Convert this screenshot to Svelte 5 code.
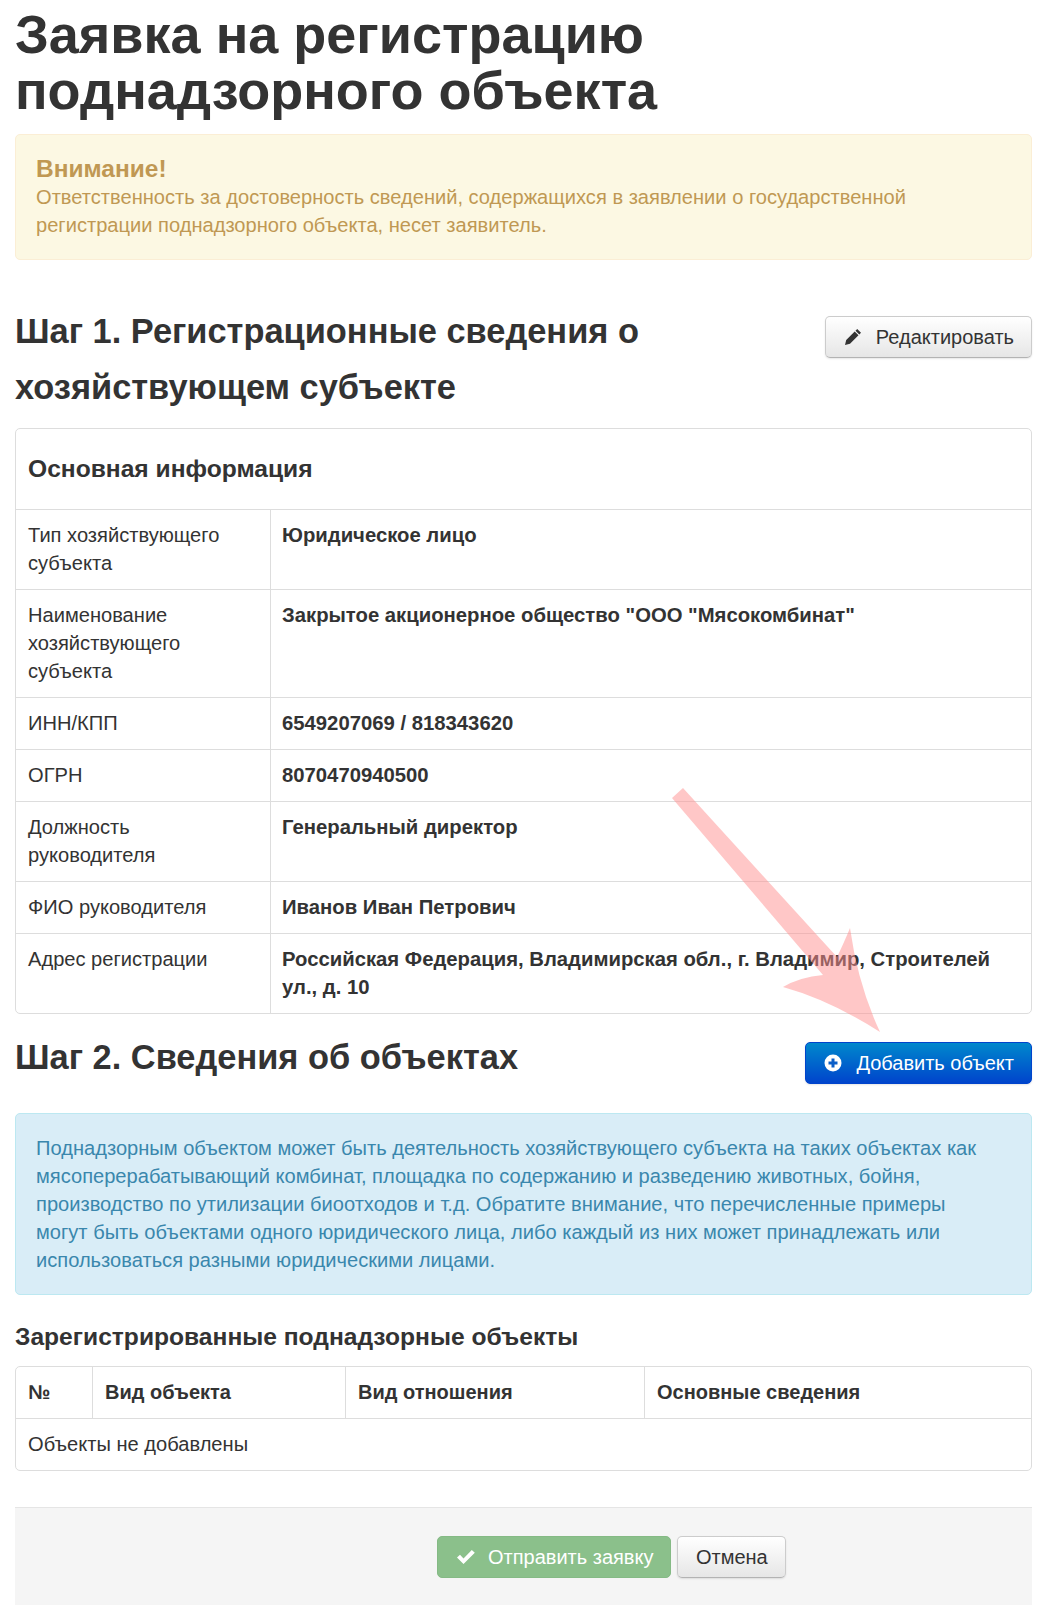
<script>
	const info = [
		{ label: 'Тип хозяйствующего субъекта', value: 'Юридическое лицо' },
		{ label: 'Наименование хозяйствующего субъекта', value: 'Закрытое акционерное общество "ООО "Мясокомбинат"' },
		{ label: 'ИНН/КПП', value: '6549207069 / 818343620' },
		{ label: 'ОГРН', value: '8070470940500' },
		{ label: 'Должность руководителя', value: 'Генеральный директор' },
		{ label: 'ФИО руководителя', value: 'Иванов Иван Петрович' },
		{ label: 'Адрес регистрации', value: 'Российская Федерация, Владимирская обл., г. Владимир, Строителей ул., д. 10' }
	];
	const columns = ['№', 'Вид объекта', 'Вид отношения', 'Основные сведения'];
</script>

<div class="page">
	<h1>Заявка на регистрацию поднадзорного объекта</h1>

	<div class="alert warning">
		<h4>Внимание!</h4>
		Ответственность за достоверность сведений, содержащихся в заявлении о государственной регистрации поднадзорного объекта, несет заявитель.
	</div>

	<div class="step step-one">
		<h2>Шаг 1. Регистрационные сведения о хозяйствующем субъекте</h2>
		<button class="btn">
			<svg width="18" height="18" viewBox="0 0 18 18"><path fill="#333" d="M13.200 1 17 4.800 15.300 6.500 11.500 2.700zM10.700 3.500 14.500 7.300 6 15.800 1 17 2.200 12z" /></svg>
			Редактировать
		</button>
	</div>

	<div class="table-box info">
		<div class="caption">Основная информация</div>
		{#each info as row}
			<div class="row">
				<div class="label">{row.label}</div>
				<div class="value">{row.value}</div>
			</div>
		{/each}
	</div>

	<div class="step step-two">
		<h2>Шаг 2. Сведения об объектах</h2>
		<button class="btn primary">
			<svg width="18" height="18" viewBox="0 0 18 18"><circle cx="9" cy="9" r="8.500" fill="#fff" /><path fill="#0a5ec8" d="M7.500 4.500h3v3h3v3h-3v3h-3v-3h-3v-3h3z" /></svg>
			Добавить объект
		</button>
	</div>

	<div class="alert notice">
		Поднадзорным объектом может быть деятельность хозяйствующего субъекта на таких объектах как мясоперерабатывающий комбинат, площадка по содержанию и разведению животных, бойня, производство по утилизации биоотходов и т.д. Обратите внимание, что перечисленные примеры могут быть объектами одного юридического лица, либо каждый из них может принадлежать или использоваться разными юридическими лицами.
	</div>

	<h3>Зарегистрированные поднадзорные объекты</h3>

	<div class="table-box objects">
		<div class="head">
			{#each columns as col}
				<div>{col}</div>
			{/each}
		</div>
		<div class="empty">Объекты не добавлены</div>
	</div>

	<div class="actions">
		<button class="btn success">
			<svg width="20" height="18" viewBox="0 0 20 18"><path fill="#fff" d="M1 9.500 4 6.800 7.500 10.500 15.800 2 18.800 4.800 7.500 16z" /></svg>
			Отправить заявку
		</button>
		<button class="btn cancel">Отмена</button>
	</div>

	<svg class="arrow" width="240" height="270" viewBox="660 780 240 270">
		<path
			fill="#ff9090"
			fill-opacity="0.5"
			d="M672 798 683 788 837 957Q843 945 850 928 858 985 880 1032 830 1000 783 987 800 977 823 975Z"
		/>
	</svg>
</div>

<style>
	:global(body) {
		background: #fff;
	}
	.page {
		position: relative;
		box-sizing: border-box;
		width: 1046px;
		height: 1620px;
		padding: 0 14px 0 15px;
		font: 20.100px/28px 'Liberation Sans', Arial, sans-serif;
		color: #333;
	}
	h1 {
		margin: 0;
		padding-top: 6px;
		width: 700px;
		font-size: 54px;
		line-height: 56px;
	}
	.alert {
		box-sizing: border-box;
		border: 1px solid;
		border-radius: 5px;
	}
	.warning {
		margin-top: 16px;
		height: 126px;
		padding: 20px 20px;
		background: #fcf8e3;
		border-color: #fbeed5;
		color: #c09853;
	}
	.warning h4 {
		margin: 0;
		font-size: 24.500px;
		line-height: 28px;
	}
	.step {
		display: flex;
		justify-content: space-between;
		align-items: flex-start;
	}
	.step h2 {
		margin: 0;
		font-size: 34.400px;
		line-height: 56px;
	}
	.step-one {
		margin-top: 43px;
	}
	.step-one h2 {
		width: 680px;
	}
	.step-one .btn {
		margin-top: 13px;
	}
	.step-two {
		margin-top: 14px;
	}
	.step-two h2 {
		padding-top: 1px;
	}
	.step-two .btn {
		margin-top: 14px;
	}
	.btn {
		display: inline-flex;
		align-items: center;
		gap: 14px;
		box-sizing: border-box;
		height: 42px;
		padding: 0 17px 0 18px;
		border: 1px solid #ccc;
		border-bottom-color: #b3b3b3;
		border-radius: 5px;
		background: linear-gradient(#fff, #e6e6e6);
		box-shadow: 0 1px 2px rgba(0, 0, 0, 0.1);
		font: inherit;
		font-size: 20px;
		color: #333;
	}
	.primary {
		background: linear-gradient(#0088cc, #0044cc);
		border-color: #0044cc;
		color: #fff;
	}
	.success {
		gap: 12px;
		background: #8bc08b;
		border-color: #85ba85;
		color: #fff;
		box-shadow: none;
	}
	.cancel {
		padding: 0 17.500px;
	}
	.table-box {
		box-sizing: border-box;
		border: 1px solid #ddd;
		border-radius: 5px;
	}
	.info {
		margin-top: 13px;
	}
	.caption {
		height: 80px;
		box-sizing: border-box;
		padding: 13px 12px 0;
		font-size: 24.600px;
		font-weight: bold;
		line-height: 54px;
	}
	.row {
		display: grid;
		grid-template-columns: 254px 1fr;
		border-top: 1px solid #ddd;
	}
	.label,
	.value {
		padding: 11px 12px 12px;
	}
	.value {
		padding-left: 11px;
		border-left: 1px solid #ddd;
		font-size: 20.300px;
		font-weight: bold;
	}
	.notice {
		margin-top: 28px;
		padding: 20px 50px 20px 20px;
		height: 182px;
		background: #d9edf7;
		border-color: #bce8f1;
		color: #3a87ad;
	}
	h3 {
		margin: 28px 0 0;
		font-size: 24.600px;
		line-height: 28px;
	}
	.objects {
		margin-top: 15px;
	}
	.head {
		display: grid;
		grid-template-columns: 76px 253px 299px 1fr;
		font-size: 20px;
		font-weight: bold;
	}
	.head div {
		padding: 11px 12px 12px;
	}
	.head div + div {
		border-left: 1px solid #ddd;
	}
	.empty {
		padding: 11px 12px 12px;
		border-top: 1px solid #ddd;
	}
	.actions {
		display: flex;
		justify-content: flex-start;
		gap: 6px;
		box-sizing: border-box;
		height: 98px;
		margin-top: 36px;
		padding: 28px 0 0 422px;
		background: #f5f5f5;
		border-top: 1px solid #e5e5e5;
	}
	.arrow {
		position: absolute;
		left: 660px;
		top: 780px;
		pointer-events: none;
	}
</style>
